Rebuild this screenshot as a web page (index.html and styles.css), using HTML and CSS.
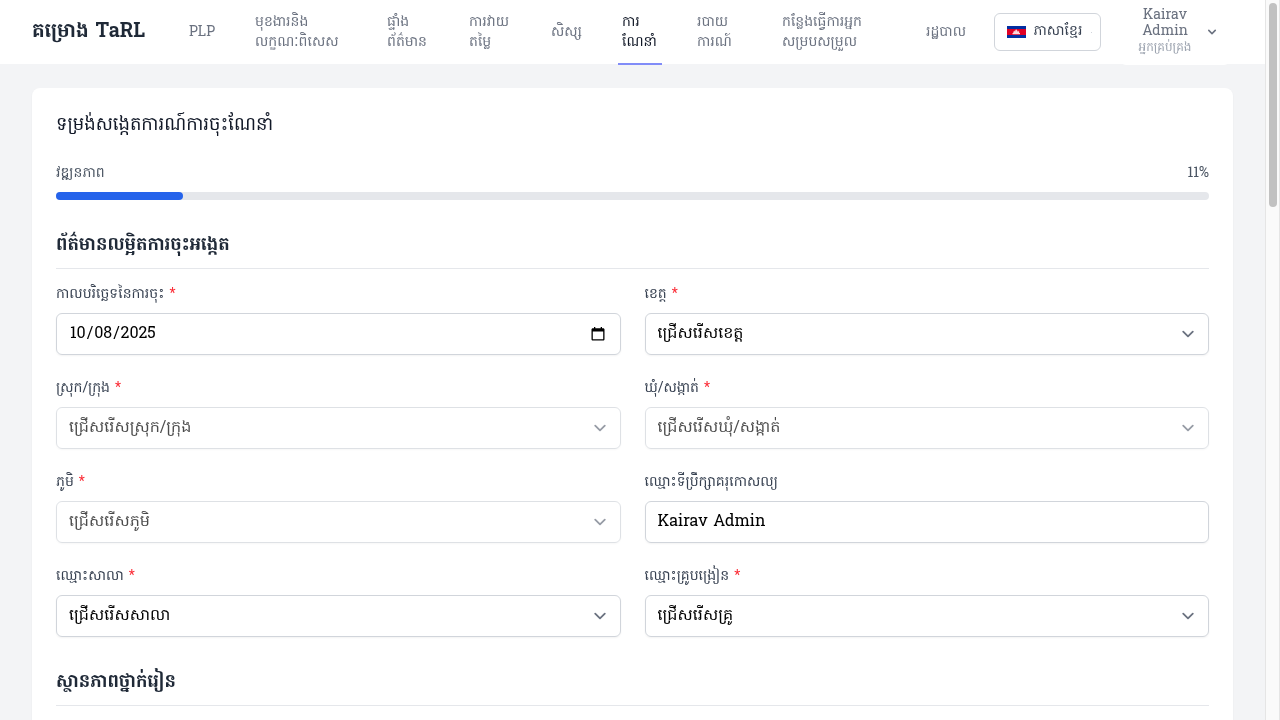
FILE: index.html
```html
<!DOCTYPE html>
<html lang="km">
<head>
<meta charset="utf-8">
<title>គម្រោង TaRL</title>
<link rel="stylesheet" href="styles.css">
</head>
<body>
<div class="viewport">
  <div class="page">
    <header class="topbar">
      <div class="brand">គម្រោង TaRL</div>
      <nav class="nav">
        <a class="nav-item plp">PLP</a>
        <a class="nav-item features">មុខងារនិង<br>លក្ខណៈពិសេស</a>
        <a class="nav-item dashboard">ផ្ទាំង<br>ព័ត៌មាន</a>
        <a class="nav-item assess">ការវាយ<br>តម្លៃ</a>
        <a class="nav-item students">សិស្ស</a>
        <a class="nav-item mentoring active">ការ<br>ណែនាំ</a>
        <a class="nav-item reports">របាយ<br>ការណ៍</a>
        <a class="nav-item workspace">កន្លែងធ្វើការអ្នក<br>សម្របសម្រួល</a>
        <a class="nav-item admin">រដ្ឋបាល</a>
      </nav>
      <div class="language">
        <svg class="flag" viewBox="0 0 19 12"><path fill="#032ea1" d="M0 0h19v12H0z"/><path fill="#e00025" d="M0 3h19v6H0z"/><path fill="#fff" d="M5.500 8.200V6.900h.8V5.600h.7V4.700h.7v.9h.5V4.300h.5V3.500h1v.8h.5v1.300h.5v-.9h.8v.9h.7v1.300h.8v1.300z" opacity=".85"/></svg>
        <span>ភាសាខ្មែរ</span><i class="dot"></i>
      </div>
      <div class="user">
        <div class="user-text"><div class="user-name">Kairav<br>Admin</div><div class="user-role">អ្នកគ្រប់គ្រង</div></div>
        <svg class="user-caret" viewBox="0 0 20 20"><path d="M5.300 7.300a1 1 0 0 1 1.400 0L10 10.600l3.300-3.300a1 1 0 1 1 1.400 1.400l-4 4a1 1 0 0 1-1.400 0l-4-4a1 1 0 0 1 0-1.400z"/></svg>
      </div>
    </header>
    <main class="card">
      <h1 class="title">ទម្រង់សង្កេតការណ៍ការចុះណែនាំ</h1>
      <div class="progress-head"><span>វឌ្ឍនភាព</span><span>11%</span></div>
      <div class="track"><div class="fill" style="width:11%"></div></div>
      <h2 class="section">ព័ត៌មានលម្អិតការចុះអង្កេត</h2>
      <div class="grid">
        <div class="field"><label>កាលបរិច្ឆេទនៃការចុះ <b>*</b></label><div class="control"><span class="date"><i>10</i>/<i>08</i>/<i>2025</i></span><svg class="calendar" viewBox="0 0 14 14"><path fill="#000" fill-rule="evenodd" d="M3 0h1.300v1.300h5.400V0H11v1.300h1.200c.7 0 1.300.6 1.300 1.300v9.600c0 .7-.6 1.300-1.300 1.300H1.800c-.7 0-1.300-.6-1.300-1.300V2.600c0-.7.6-1.300 1.300-1.300H3zM1.800 4.500v7.700h10.400V4.500z"/></svg></div></div>
        <div class="field"><label>ខេត្ត <b>*</b></label><div class="control"><span>ជ្រើសរើសខេត្ត</span><svg class="caret" viewBox="0 0 20 20"><path d="M6 8l4 4 4-4"/></svg></div></div>
        <div class="field"><label>ស្រុក/ក្រុង <b>*</b></label><div class="control disabled"><span>ជ្រើសរើសស្រុក/ក្រុង</span><svg class="caret" viewBox="0 0 20 20"><path d="M6 8l4 4 4-4"/></svg></div></div>
        <div class="field"><label>ឃុំ/សង្កាត់ <b>*</b></label><div class="control disabled"><span>ជ្រើសរើសឃុំ/សង្កាត់</span><svg class="caret" viewBox="0 0 20 20"><path d="M6 8l4 4 4-4"/></svg></div></div>
        <div class="field"><label>ភូមិ <b>*</b></label><div class="control disabled"><span>ជ្រើសរើសភូមិ</span><svg class="caret" viewBox="0 0 20 20"><path d="M6 8l4 4 4-4"/></svg></div></div>
        <div class="field"><label>ឈ្មោះទីប្រឹក្សាគរុកោសល្យ</label><div class="control"><span class="name">Kairav Admin</span></div></div>
        <div class="field"><label>ឈ្មោះសាលា <b>*</b></label><div class="control"><span>ជ្រើសរើសសាលា</span><svg class="caret" viewBox="0 0 20 20"><path d="M6 8l4 4 4-4"/></svg></div></div>
        <div class="field"><label>ឈ្មោះគ្រូបង្រៀន <b>*</b></label><div class="control"><span>ជ្រើសរើសគ្រូ</span><svg class="caret" viewBox="0 0 20 20"><path d="M6 8l4 4 4-4"/></svg></div></div>
      </div>
      <h2 class="section second">ស្ថានភាពថ្នាក់រៀន</h2>
    </main>
  </div>
  <div class="scrollbar"><div class="thumb"></div></div>
</div>
</body>
</html>
```

FILE: styles.css
```css
* { box-sizing: border-box; }
body { margin: 0; font-family: Hanuman, "Noto Serif Khmer", "Noto Sans Khmer", "Khmer OS", "DejaVu Serif Condensed", "DejaVu Serif", serif; color: #1f2937; }
h1, h2 { margin: 0; white-space: nowrap; }
.viewport { display: flex; width: 1280px; height: 720px; overflow: hidden; }
.page { width: 1265px; height: 720px; background: #f3f4f6; overflow: hidden; will-change: transform; }
.topbar { height: 64px; background: #fff; padding-left: 32px; display: flex; align-items: center; }
.brand { width: 157px; font-size: 20px; line-height: 28px; font-weight: 700; white-space: nowrap; }
.nav { display: flex; height: 64px; width: 805px; }
.nav-item { flex: none; display: flex; align-items: center; font-size: 14px; line-height: 20px; color: #6b7280; white-space: nowrap; height: 65px; padding-top: 1px; }
.plp { width: 66px; }
.features { width: 132px; }
.dashboard { width: 82px; }
.assess { width: 82px; }
.students { width: 67px; }
.mentoring { width: 43.500px; margin-right: 35.500px; padding-left: 4px; }
.active { color: #111827; border-bottom: 2px solid #818cf8; padding-top: 3px; }
.reports { width: 85px; }
.workspace { width: 144px; }
.admin { width: 68px; }
.language { flex: none; width: 107px; height: 38px; border: 1px solid #d1d5db; border-radius: 6px; display: flex; align-items: center; padding-left: 12px; font-size: 14px; line-height: 20px; color: #374151; white-space: nowrap; }
.language span { margin-left: 7.500px; width: 57.500px; }
.flag { width: 19px; height: 12px; flex: none; }
.dot { width: 1px; height: 1px; background: #d1d5db; }
.user { display: flex; align-items: center; width: 110px; height: 65px; margin: 0 0 -1px 19px; background: #fff; border-radius: 6px; padding-bottom: 1px; }
.user-text { width: 90px; text-align: center; }
.user-name { font-size: 14px; line-height: 16px; color: #6b7280; }
.user-role { font-size: 12px; line-height: 16px; color: #9ca3af; white-space: nowrap; }
.user-caret { width: 16px; height: 16px; fill: #6b7280; margin-left: -6px; }
.card { margin: 24px 32px 0; height: 700px; background: #fff; border-radius: 8px; padding: 24px 24px; box-shadow: 0 1px 2px rgba(0,0,0,.05); }
.title { font-size: 18px; line-height: 28px; font-weight: 400; color: #111827; }
.progress-head { display: flex; justify-content: space-between; margin-top: 24px; height: 20px; font-size: 14px; line-height: 20px; color: #4b5563; }
.track { margin-top: 8px; height: 8px; border-radius: 4px; background: #e5e7eb; }
.fill { height: 8px; border-radius: 4px; background: #2563eb; }
.section { margin-top: 32px; height: 37px; font-size: 18px; line-height: 28px; font-weight: 700; border-bottom: 1px solid #e5e7eb; }
.grid { margin-top: 16px; display: grid; grid-template-columns: 1fr 1fr; gap: 24px 24px; }
.field { height: 70px; display: flex; flex-direction: column; justify-content: space-between; }
.field label { height: 20px; font-size: 14px; line-height: 20px; color: #374151; white-space: nowrap; }
.field b { color: #fb2c36; font-weight: 400; }
.control { height: 42px; border: 1px solid #d1d5db; border-radius: 6px; box-shadow: 0 1px 2px rgba(0,0,0,.05); display: flex; justify-content: space-between; align-items: center; padding: 0 8px 0 12px; font-size: 16px; line-height: 24px; color: #000; white-space: nowrap; }
.date i { font-style: normal; padding: 0 1px; }
.disabled { opacity: .7; }
.caret { width: 24px; height: 24px; fill: none; stroke: #6b7280; stroke-width: 1.500; stroke-linecap: round; stroke-linejoin: round; }
.calendar { width: 14px; height: 14px; margin: 0 7px 1px 0; }
.second { margin-top: 32px; }
.scrollbar { width: 15px; height: 720px; background: #fafafa; border-left: 1px solid #e5e5e5; border-right: 1px solid #e5e5e5; padding: 3px; }
.thumb { width: 8px; height: 204px; border-radius: 4px; background: #c1c1c1; }
```
